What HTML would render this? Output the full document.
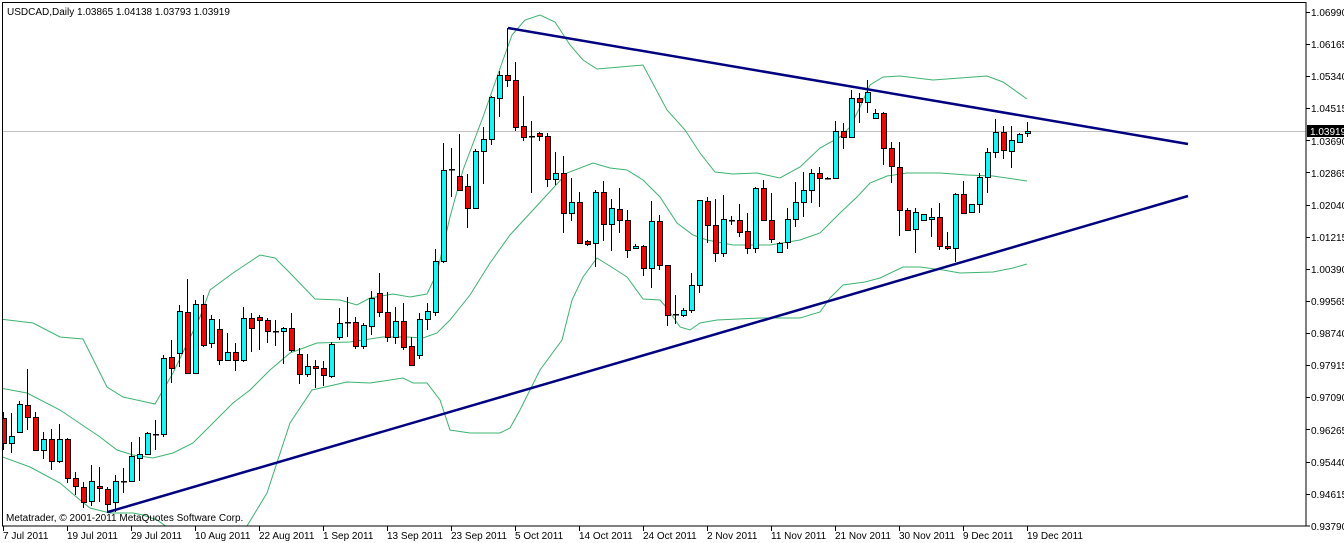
<!DOCTYPE html>
<html><head><meta charset="utf-8"><style>
html,body{margin:0;padding:0;background:#fff;}
svg{display:block;}
text{font-family:"Liberation Sans",sans-serif;font-size:10px;fill:#000;}
</style></head><body>
<svg width="1344" height="543" xmlns="http://www.w3.org/2000/svg">
<defs><clipPath id="c"><rect x="2" y="2" width="1304" height="524"/></clipPath></defs>
<rect x="0" y="0" width="1344" height="543" fill="#fff"/>
<g clip-path="url(#c)">
<line x1="2" y1="131.5" x2="1306" y2="131.5" stroke="#c0c0c0"/>
<g fill="none" stroke="#3cb371" stroke-width="1">
<polyline points="0,319 33,323 60,337 83,339 107,387 123,397 155,404 173,373 200,317 210,290 233,273 260,255 275,258 290,273 315,299 340,300 357,305 370,298 393,294 410,297 427,294 437,273 450,217 463,170 483,117 503,60 512,35 525,20 540,15 555,22 570,45 583,60 597,69 643,65 667,110 685,130 700,153 715,172 733,174 757,173 780,178 800,167 820,148 840,137 850,127 860,107 870,85 883,77 900,76 933,80 960,78 987,76 1003,82 1027,99"/>
<polyline points="0,388 27,393 60,410 100,437 117,450 133,455 153,458 173,453 193,443 213,423 233,403 250,390 270,370 290,353 317,343 350,342 383,337 407,337 423,338 437,333 450,320 470,295 490,263 510,235 533,210 567,173 593,163 610,168 627,170 643,180 660,197 677,223 693,235 707,240 733,245 770,245 800,240 820,233 840,213 857,197 870,183 887,176 907,173 940,173 967,175 993,176 1027,181"/>
<polyline points="0,456 30,467 60,483 80,500 90,508 110,513 133,513 143,515 157,520 167,527 200,540 240,540 247,526 267,493 290,423 312,390 347,382 370,383 403,378 413,383 427,383 440,400 450,430 470,433 500,433 510,428 520,410 540,370 562,340 572,300 583,277 597,258 613,268 627,277 643,299 660,300 667,308 680,327 690,330 700,323 717,320 760,318 800,318 820,312 830,298 843,285 865,282 880,278 903,267 920,267 943,270 960,273 993,272 1013,268 1027,264"/>
</g>
<path fill="none" stroke="#000" stroke-width="1" d="M3.5 412V450M11.5 413V453M19.5 401V433M27.5 369V430M35.5 412V450M43.5 432V459M51.5 429V470M59.5 424V463M67.5 438V483M75.5 472V495M83.5 482V508M91.5 465V506M99.5 467V502M107.5 487V513M115.5 475V512M123.5 468V493M131.5 442V482M139.5 437V481M147.5 432V454M155.5 420V450M163.5 355V437M171.5 340V383M179.5 305V367M187.5 279V374M195.5 300V373M203.5 295V347M211.5 315V348M219.5 319V365M227.5 333V360M235.5 343V371M243.5 307V362M251.5 313V352M259.5 315V350M267.5 318V343M275.5 320V346M283.5 327V364M291.5 313V352M299.5 348V384M307.5 354V377M315.5 360V388M323.5 361V386M331.5 342V378M339.5 308V340M347.5 297V337M355.5 317V349M363.5 323V349M371.5 291V335M379.5 273V317M387.5 292V342M395.5 307V344M403.5 303V350M411.5 337V365M419.5 313V359M427.5 303V330M435.5 249V316M443.5 143V263M451.5 148V197M459.5 134V190M467.5 174V228M475.5 149V208M483.5 127V184M491.5 96V145M499.5 71V117M507.5 28V87M515.5 62V131M523.5 96V141M531.5 121V193M539.5 132V141M547.5 133V187M555.5 152V185M563.5 156V233M571.5 178V221M579.5 192V244M587.5 240V246M595.5 190V267M603.5 181V241M611.5 199V251M619.5 188V233M627.5 210V258M635.5 244V248M643.5 245V276M651.5 201V288M659.5 215V270M667.5 265V326M675.5 295V324M683.5 308V317M691.5 273V313M699.5 200V293M707.5 197V243M715.5 199V262M723.5 195V257M731.5 216V225M739.5 204V237M747.5 213V254M755.5 187V253M763.5 180V220M771.5 193V243M779.5 242V252M787.5 208V249M795.5 182V227M803.5 172V217M811.5 169V203M819.5 167V207M827.5 177V179M835.5 121V178M843.5 123V149M851.5 90V138M859.5 93V123M867.5 80V113M875.5 109V118M883.5 112V165M891.5 142V183M899.5 142V236M907.5 208V231M915.5 208V253M923.5 214V220M931.5 208V237M939.5 203V250M947.5 232V250M955.5 193V262M963.5 181V214M971.5 204V212M979.5 173V213M987.5 148V193M995.5 119V158M1003.5 126V159M1011.5 126V168M1019.5 133V142M1027.5 122V137"/>
<g fill="#ff0000" stroke="#000" stroke-width="1">
<rect x="1.5" y="418.5" width="5" height="25"/>
<rect x="25.5" y="405.5" width="5" height="12"/>
<rect x="33.5" y="417.5" width="5" height="33"/>
<rect x="49.5" y="439.5" width="5" height="22"/>
<rect x="65.5" y="439.5" width="5" height="39"/>
<rect x="73.5" y="478.5" width="5" height="8"/>
<rect x="81.5" y="487.5" width="5" height="15"/>
<rect x="97.5" y="486.5" width="5" height="2"/>
<rect x="105.5" y="489.5" width="5" height="15"/>
<rect x="169.5" y="357.5" width="5" height="11"/>
<rect x="185.5" y="312.5" width="5" height="61"/>
<rect x="201.5" y="304.5" width="5" height="41"/>
<rect x="217.5" y="329.5" width="5" height="31"/>
<rect x="233.5" y="352.5" width="5" height="8"/>
<rect x="249.5" y="318.5" width="5" height="10"/>
<rect x="257.5" y="317.5" width="5" height="3"/>
<rect x="265.5" y="320.5" width="5" height="11"/>
<rect x="289.5" y="328.5" width="5" height="22"/>
<rect x="297.5" y="354.5" width="5" height="20"/>
<rect x="313.5" y="366.5" width="5" height="2"/>
<rect x="321.5" y="368.5" width="5" height="7"/>
<rect x="353.5" y="322.5" width="5" height="24"/>
<rect x="377.5" y="293.5" width="5" height="19"/>
<rect x="385.5" y="312.5" width="5" height="25"/>
<rect x="401.5" y="321.5" width="5" height="26"/>
<rect x="409.5" y="346.5" width="5" height="19"/>
<rect x="457.5" y="176.5" width="5" height="14"/>
<rect x="465.5" y="186.5" width="5" height="22"/>
<rect x="505.5" y="75.5" width="5" height="5"/>
<rect x="513.5" y="80.5" width="5" height="47"/>
<rect x="521.5" y="126.5" width="5" height="11"/>
<rect x="537.5" y="133.5" width="5" height="3"/>
<rect x="545.5" y="136.5" width="5" height="43"/>
<rect x="561.5" y="173.5" width="5" height="40"/>
<rect x="577.5" y="202.5" width="5" height="41"/>
<rect x="585.5" y="241.5" width="5" height="3"/>
<rect x="601.5" y="192.5" width="5" height="32"/>
<rect x="617.5" y="209.5" width="5" height="11"/>
<rect x="625.5" y="220.5" width="5" height="30"/>
<rect x="641.5" y="246.5" width="5" height="22"/>
<rect x="657.5" y="221.5" width="5" height="44"/>
<rect x="665.5" y="265.5" width="5" height="50"/>
<rect x="705.5" y="201.5" width="5" height="24"/>
<rect x="713.5" y="225.5" width="5" height="28"/>
<rect x="737.5" y="220.5" width="5" height="12"/>
<rect x="745.5" y="231.5" width="5" height="17"/>
<rect x="761.5" y="188.5" width="5" height="32"/>
<rect x="769.5" y="220.5" width="5" height="19"/>
<rect x="817.5" y="173.5" width="5" height="5"/>
<rect x="841.5" y="131.5" width="5" height="6"/>
<rect x="857.5" y="98.5" width="5" height="4"/>
<rect x="881.5" y="113.5" width="5" height="35"/>
<rect x="889.5" y="148.5" width="5" height="18"/>
<rect x="897.5" y="167.5" width="5" height="43"/>
<rect x="905.5" y="210.5" width="5" height="20"/>
<rect x="937.5" y="217.5" width="5" height="29"/>
<rect x="945.5" y="246.5" width="5" height="2"/>
<rect x="961.5" y="194.5" width="5" height="19"/>
<rect x="1001.5" y="132.5" width="5" height="18"/>
</g>
<g fill="#00ffff" stroke="#000" stroke-width="1">
<rect x="9.5" y="436.5" width="5" height="7"/>
<rect x="17.5" y="404.5" width="5" height="28"/>
<rect x="41.5" y="439.5" width="5" height="11"/>
<rect x="57.5" y="439.5" width="5" height="22"/>
<rect x="89.5" y="481.5" width="5" height="20"/>
<rect x="113.5" y="481.5" width="5" height="21"/>
<rect x="129.5" y="456.5" width="5" height="25"/>
<rect x="137.5" y="454.5" width="5" height="4"/>
<rect x="145.5" y="433.5" width="5" height="21"/>
<rect x="161.5" y="358.5" width="5" height="76"/>
<rect x="177.5" y="311.5" width="5" height="42"/>
<rect x="193.5" y="304.5" width="5" height="69"/>
<rect x="209.5" y="319.5" width="5" height="24"/>
<rect x="225.5" y="352.5" width="5" height="8"/>
<rect x="241.5" y="318.5" width="5" height="42"/>
<rect x="281.5" y="328.5" width="5" height="3"/>
<rect x="305.5" y="366.5" width="5" height="8"/>
<rect x="329.5" y="344.5" width="5" height="32"/>
<rect x="337.5" y="323.5" width="5" height="14"/>
<rect x="361.5" y="325.5" width="5" height="21"/>
<rect x="369.5" y="298.5" width="5" height="28"/>
<rect x="393.5" y="321.5" width="5" height="16"/>
<rect x="417.5" y="319.5" width="5" height="36"/>
<rect x="425.5" y="311.5" width="5" height="8"/>
<rect x="433.5" y="261.5" width="5" height="51"/>
<rect x="441.5" y="170.5" width="5" height="91"/>
<rect x="473.5" y="151.5" width="5" height="57"/>
<rect x="481.5" y="139.5" width="5" height="12"/>
<rect x="489.5" y="97.5" width="5" height="42"/>
<rect x="497.5" y="75.5" width="5" height="23"/>
<rect x="553.5" y="173.5" width="5" height="6"/>
<rect x="569.5" y="202.5" width="5" height="11"/>
<rect x="593.5" y="192.5" width="5" height="51"/>
<rect x="609.5" y="208.5" width="5" height="16"/>
<rect x="633.5" y="246.5" width="5" height="2"/>
<rect x="649.5" y="221.5" width="5" height="47"/>
<rect x="681.5" y="310.5" width="5" height="5"/>
<rect x="689.5" y="285.5" width="5" height="25"/>
<rect x="697.5" y="200.5" width="5" height="85"/>
<rect x="721.5" y="219.5" width="5" height="34"/>
<rect x="753.5" y="188.5" width="5" height="60"/>
<rect x="777.5" y="243.5" width="5" height="9"/>
<rect x="785.5" y="219.5" width="5" height="23"/>
<rect x="793.5" y="202.5" width="5" height="17"/>
<rect x="801.5" y="190.5" width="5" height="12"/>
<rect x="809.5" y="173.5" width="5" height="17"/>
<rect x="833.5" y="131.5" width="5" height="47"/>
<rect x="849.5" y="98.5" width="5" height="39"/>
<rect x="865.5" y="92.5" width="5" height="10"/>
<rect x="873.5" y="113.5" width="5" height="5"/>
<rect x="913.5" y="212.5" width="5" height="17"/>
<rect x="921.5" y="214.5" width="5" height="6"/>
<rect x="929.5" y="217.5" width="5" height="2"/>
<rect x="953.5" y="194.5" width="5" height="54"/>
<rect x="969.5" y="204.5" width="5" height="8"/>
<rect x="977.5" y="177.5" width="5" height="27"/>
<rect x="985.5" y="152.5" width="5" height="25"/>
<rect x="993.5" y="132.5" width="5" height="20"/>
<rect x="1009.5" y="140.5" width="5" height="11"/>
<rect x="1017.5" y="134.5" width="5" height="8"/>
<rect x="1025.5" y="131.5" width="5" height="2"/>
</g>
<g fill="#000">
<rect x="121" y="481" width="6" height="1.5"/>
<rect x="153" y="434" width="6" height="1.5"/>
<rect x="273" y="331" width="6" height="1.5"/>
<rect x="345" y="322" width="6" height="1.5"/>
<rect x="449" y="169" width="6" height="1.5"/>
<rect x="529" y="136" width="6" height="1.5"/>
<rect x="673" y="314" width="6" height="1.5"/>
<rect x="729" y="220" width="6" height="1.5"/>
<rect x="825" y="178" width="6" height="1.5"/>
</g>
<g stroke="#000080" stroke-width="2.5">
<line x1="508" y1="28" x2="1188" y2="144"/>
<line x1="108" y1="512" x2="1188" y2="196"/>
</g>
</g>
<rect x="2.5" y="2.5" width="1303.5" height="523.5" fill="none" stroke="#000" stroke-width="1"/>
<text x="7" y="15">USDCAD,Daily  1.03865 1.04138 1.03793 1.03919</text>
<text x="6" y="521">Metatrader, © 2001-2011 MetaQuotes Software Corp.</text>
<g stroke="#000">
<path d="M1306 12.5h4M1306 44.5h4M1306 76.5h4M1306 108.5h4M1306 140.5h4M1306 172.5h4M1306 205.5h4M1306 237.5h4M1306 269.5h4M1306 301.5h4M1306 333.5h4M1306 365.5h4M1306 397.5h4M1306 429.5h4M1306 462.5h4M1306 494.5h4M1306 526h4"/>
<path d="M3.5 526v5M67.5 526v5M131.5 526v5M195.5 526v5M259.5 526v5M323.5 526v5M387.5 526v5M451.5 526v5M515.5 526v5M579.5 526v5M643.5 526v5M707.5 526v5M771.5 526v5M835.5 526v5M899.5 526v5M963.5 526v5M1027.5 526v5"/>
</g>
<g>
<text x="1311" y="16">1.06990</text>
<text x="1311" y="48">1.06165</text>
<text x="1311" y="80">1.05340</text>
<text x="1311" y="112">1.04515</text>
<text x="1311" y="145">1.03690</text>
<text x="1311" y="177">1.02865</text>
<text x="1311" y="209">1.02040</text>
<text x="1311" y="241">1.01215</text>
<text x="1311" y="273">1.00390</text>
<text x="1311" y="305">0.99565</text>
<text x="1311" y="337">0.98740</text>
<text x="1311" y="369">0.97915</text>
<text x="1311" y="401">0.97090</text>
<text x="1311" y="434">0.96265</text>
<text x="1311" y="466">0.95440</text>
<text x="1311" y="498">0.94615</text>
<text x="1311" y="530">0.93790</text>
</g>
<rect x="1307" y="125" width="37" height="12" fill="#000"/>
<text x="1310" y="135" style="fill:#fff">1.03919</text>
<g>
<text x="3" y="539">7 Jul 2011</text>
<text x="67" y="539">19 Jul 2011</text>
<text x="131" y="539">29 Jul 2011</text>
<text x="195" y="539">10 Aug 2011</text>
<text x="259" y="539">22 Aug 2011</text>
<text x="323" y="539">1 Sep 2011</text>
<text x="387" y="539">13 Sep 2011</text>
<text x="451" y="539">23 Sep 2011</text>
<text x="515" y="539">5 Oct 2011</text>
<text x="579" y="539">14 Oct 2011</text>
<text x="643" y="539">24 Oct 2011</text>
<text x="707" y="539">2 Nov 2011</text>
<text x="771" y="539">11 Nov 2011</text>
<text x="835" y="539">21 Nov 2011</text>
<text x="899" y="539">30 Nov 2011</text>
<text x="963" y="539">9 Dec 2011</text>
<text x="1027" y="539">19 Dec 2011</text>
</g>
</svg>
</body></html>
